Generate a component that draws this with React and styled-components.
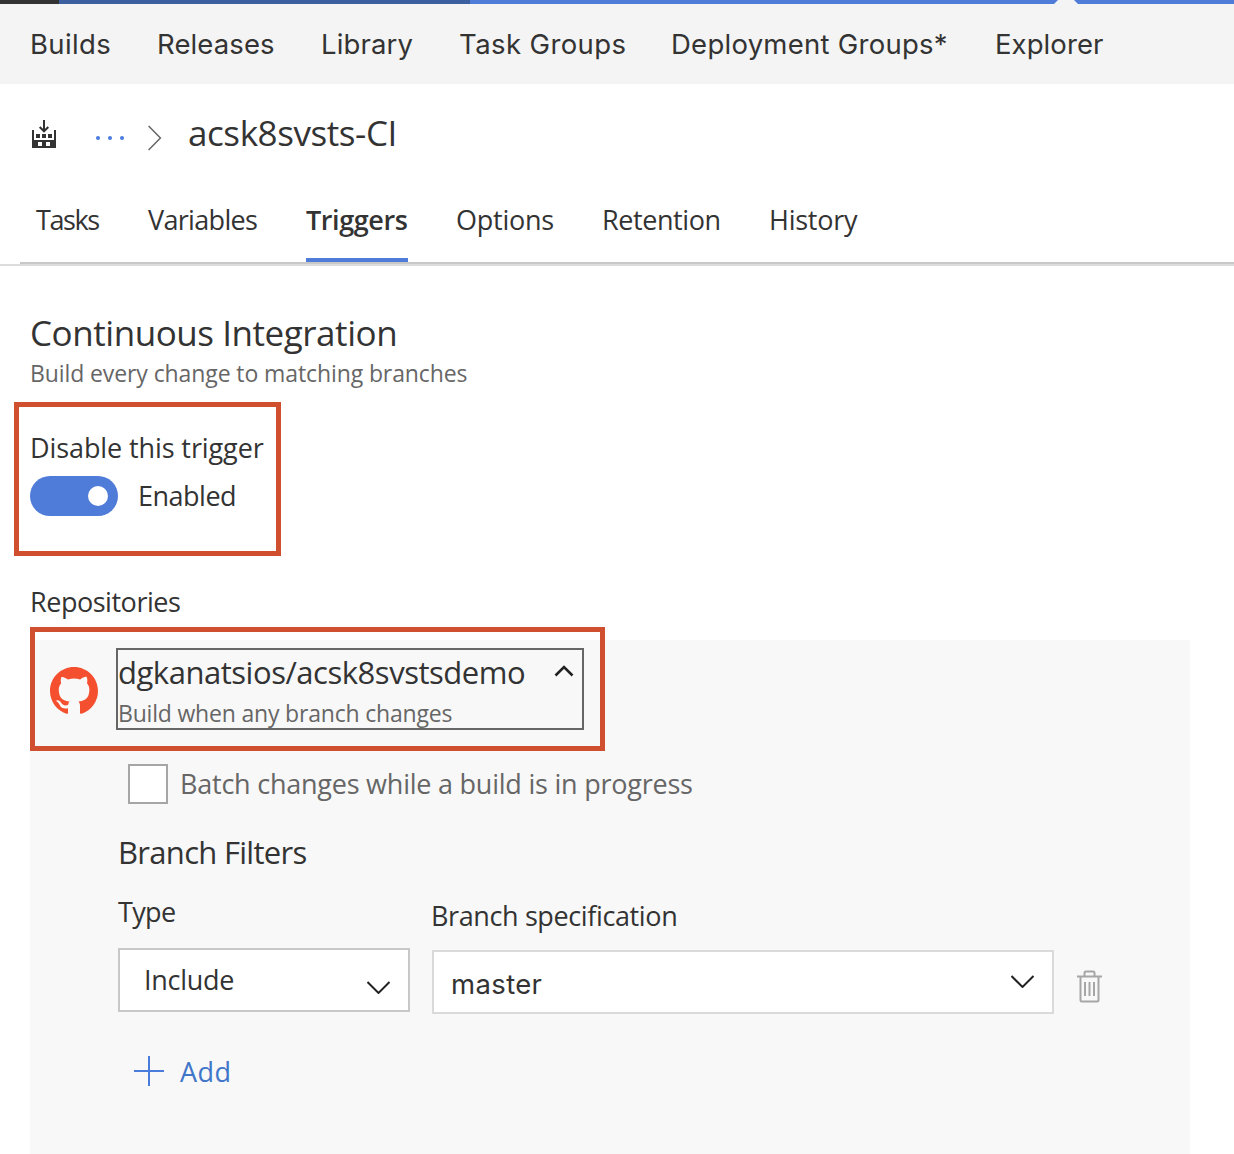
import React from "react";
import styled, { createGlobalStyle } from "styled-components";

const GlobalStyle = createGlobalStyle`
  *, *::before, *::after { box-sizing: border-box; }
  html, body { margin: 0; background: #fff; overflow: hidden; }
  body { font-family: "Open Sans", "Noto Sans", sans-serif; color: #333; }
  svg { display: block; flex: none; }
`;

const Page = styled.div`
  width: 1234px;
  height: 1154px;
  overflow: hidden;
  background: #fff;
`;

/* text with a fixed size, line height and tracking */
const Text = styled.div`
  font-size: ${(p) => p.$size || 27}px;
  line-height: ${(p) => p.$line || 36}px;
  letter-spacing: ${(p) => p.$track || 0}px;
  color: ${(p) => p.$color || "#333"};
  white-space: nowrap;
`;

const TopStrip = styled.div`
  display: grid;
  grid-template-columns: 59px 411px 584px 24px 1fr;
  height: 4px;
`;
const StripPart = styled.div`
  background: ${(p) => p.$color};
`;

const HubNav = styled.nav`
  display: grid;
  grid-template-columns: 127px 164px 138px 212px 324px 1fr;
  align-items: center;
  height: 80px;
  padding: 0 0 0 30px;
  background: #f4f4f4;
`;
const HubLink = styled(Text)`
  font-family: Inter, Roboto, sans-serif;
  font-size: 27.5px;
`;

const Crumbs = styled.header`
  display: flex;
  align-items: center;
  height: 44px;
  margin: 26px 0 0 32px;
`;
const BuildIcon = styled.svg`
  margin-top: 4px;
`;
const MoreIcon = styled.svg`
  margin: 12px 0 0 38px;
`;
const CrumbArrow = styled.svg`
  margin: 12px 26px 0 22px;
`;
const CrumbTitle = styled(Text)`
  padding-top: 2px;
`;

const TabBar = styled.div`
  border-bottom: 2px solid #dcdcdc;
`;
const TabRow = styled.div`
  display: grid;
  grid-template-columns: 112px 158px 150px 146px 167px 1fr;
  margin-left: 20px;
  padding-left: 16px;
  border-bottom: 2px solid #c8c8c8;
`;
const Tab = styled(Text)`
  justify-self: start;
  height: 108px;
  padding-top: 48px;
  font-weight: ${(p) => (p.$active ? 600 : 400)};
  border-bottom: 4px solid ${(p) => (p.$active ? "#4f7bd9" : "transparent")};
  ${(p) => p.$active && "width: 102px;"}
`;

const Content = styled.main`
  padding: 45px 0 0 30px;
`;
const Subtitle = styled(Text)`
  margin-top: 3px;
`;

const TriggerBox = styled.section`
  width: 267px;
  height: 154px;
  margin: 14px 0 0 -16px;
  padding: 23px 0 0 11px;
  border: 5px solid #cf4f2e;
`;
const ToggleRow = styled.div`
  display: flex;
  align-items: center;
  margin-top: 10px;
`;
const Toggle = styled.div`
  display: flex;
  align-items: center;
  justify-content: flex-end;
  width: 88px;
  height: 40px;
  margin-right: 20px;
  padding-right: 10px;
  border-radius: 20px;
  background: #4f7bd9;
`;
const Knob = styled.div`
  width: 20px;
  height: 20px;
  border-radius: 50%;
  background: #fff;
`;
const SectionLabel = styled(Text)`
  margin-top: 28px;
`;

const RepoPanel = styled.section`
  position: relative;
  width: 1160px;
  height: 514px;
  margin-top: 20px;
  padding-top: 8px;
  background: #f8f8f8;
`;
const Callout = styled.div`
  position: absolute;
  left: 0;
  top: -13px;
  width: 575px;
  height: 124px;
  border: 5px solid #cf4f2e;
  pointer-events: none;
`;
const RepoHeader = styled.div`
  display: flex;
  align-items: flex-start;
  padding-left: 20px;
`;
const RepoLogo = styled.svg`
  margin: 19px 18px 0 0;
`;
const RepoToggle = styled.div`
  display: flex;
  justify-content: space-between;
  width: 468px;
  height: 82px;
  padding: 1px 8px 0 0;
  border: 2px solid #666;
`;
const RepoDetail = styled(Text)`
  margin-top: 5px;
`;
const Caret = styled.svg`
  margin-top: ${(p) => p.$top}px;
`;

const CheckRow = styled.div`
  display: flex;
  align-items: center;
  gap: 12px;
  margin: 34px 0 0 98px;
`;
const Checkbox = styled.div`
  width: 40px;
  height: 40px;
  border: 2px solid #a6a6a6;
  background: #fff;
`;
const FiltersTitle = styled(Text)`
  margin: 27px 0 0 88px;
`;

const FilterRow = styled.div`
  display: grid;
  grid-template-columns: 292px 622px 26px;
  align-items: start;
  margin-left: 88px;
  column-gap: 22px;
`;
const Field = styled.div`
  padding-top: ${(p) => p.$top}px;
`;
const FieldLabel = styled(Text)`
  margin-left: ${(p) => p.$indent || 0}px;
`;
const Select = styled.div`
  display: flex;
  justify-content: space-between;
  align-items: center;
  height: 64px;
  margin-top: ${(p) => p.$gap}px;
  padding: ${(p) => p.$pad};
  border: 2px solid ${(p) => p.$border};
  background: #fff;
`;
const SelectValue = styled(Text)`
  ${(p) => p.$system && 'font-family: Inter, Roboto, sans-serif; padding-top: 4px;'}
`;
const TrashIcon = styled.svg`
  margin: 97px 0 0 1px;
`;
const AddButton = styled.div`
  display: flex;
  align-items: center;
  gap: 16px;
  margin: 38px 0 0 104px;
`;
const AddLabel = styled(Text)`
  padding-top: 2px;
`;

const hubs = [
  ["Builds", 0.35],
  ["Releases", 0.12],
  ["Library", 0.15],
  ["Task Groups", 0.4],
  ["Deployment Groups*", 0.26],
  ["Explorer", 0.08],
];

const tabs = [
  { name: "Tasks", track: -1.4 },
  { name: "Variables", track: -0.68 },
  { name: "Triggers", track: -0.42, active: true },
  { name: "Options", track: -0.25 },
  { name: "Retention", track: -0.42 },
  { name: "History", track: -0.25 },
];

function ChevronDown({ top }) {
  return (
    <Caret $top={top} width="24" height="13" viewBox="0 0 24 13" fill="none" stroke="#222" strokeWidth="2">
      <path d="M0.500 1 L11.500 12 L22.500 1" />
    </Caret>
  );
}

export default function App() {
  return (
    <Page>
      <GlobalStyle />
      <TopStrip>
        <StripPart $color="#333" />
        <StripPart $color="#3b5f9f" />
        <StripPart $color="#4f7bd9" />
        <svg width="24" height="4" viewBox="0 0 24 4">
          <rect width="24" height="4" fill="#4f7bd9" />
          <path d="M0 4 L4 0 H20 L24 4 Z" fill="#f4f4f4" />
        </svg>
        <StripPart $color="#4f7bd9" />
      </TopStrip>
      <HubNav>
        {hubs.map(([name, track]) => (
          <HubLink key={name} $track={track}>{name}</HubLink>
        ))}
      </HubNav>

      <Crumbs>
        <BuildIcon width="24" height="28" viewBox="0 0 24 28">
          <path
            fill="#333"
            fillRule="evenodd"
            d="M0 10h2v10h20V10h2v18H0z M6 22h4v4H6z M14 22h4v4h-4z"
          />
          <path fill="#333" d="M4 14h4v4H4z M10 14h4v4h-4z M16 14h4v4h-4z" />
          <path fill="none" stroke="#333" strokeWidth="2" d="M12 0v11 M7.700 7 L12 11.300 L16.300 7" />
        </BuildIcon>
        <MoreIcon width="32" height="6" viewBox="0 0 32 6" fill="#4a7ddb">
          <circle cx="4" cy="3" r="2" />
          <circle cx="16" cy="3" r="2" />
          <circle cx="28" cy="3" r="2" />
        </MoreIcon>
        <CrumbArrow width="14" height="26" viewBox="0 0 14 26" fill="none" stroke="#666" strokeWidth="1.500">
          <path d="M0.600 1 L12.400 13 L0.600 25" />
        </CrumbArrow>
        <CrumbTitle $size={35} $line={44} $track={-0.42}>acsk8svsts-CI</CrumbTitle>
      </Crumbs>

      <TabBar>
        <TabRow>
          {tabs.map((t) => (
            <Tab key={t.name} $track={t.track} $active={t.active}>{t.name}</Tab>
          ))}
        </TabRow>
      </TabBar>

      <Content>
        <Text $size={35} $line={44} $track={-0.45}>Continuous Integration</Text>
        <Subtitle $size={23} $line={30} $track={-0.1} $color="#666">
          Build every change to matching branches
        </Subtitle>

        <TriggerBox>
          <Text $track={-0.1}>Disable this trigger</Text>
          <ToggleRow>
            <Toggle><Knob /></Toggle>
            <Text $track={-0.5}>Enabled</Text>
          </ToggleRow>
        </TriggerBox>

        <SectionLabel $track={-0.47}>Repositories</SectionLabel>

        <RepoPanel>
          <RepoHeader>
            <RepoLogo width="48" height="48" viewBox="0 0 16 16" fill="#f4502f">
              <path d="M8 0C3.58 0 0 3.58 0 8c0 3.54 2.29 6.53 5.47 7.59.4.07.55-.17.55-.38 0-.19-.01-.82-.01-1.49-2.01.37-2.53-.49-2.69-.94-.09-.23-.48-.94-.82-1.13-.28-.15-.68-.52-.01-.53.63-.01 1.08.58 1.23.82.72 1.21 1.87.87 2.33.66.07-.52.28-.87.51-1.07-1.78-.2-3.64-.89-3.64-3.95 0-.87.31-1.59.82-2.15-.08-.2-.36-1.02.08-2.12 0 0 .67-.21 2.2.82.64-.18 1.32-.27 2-.27.68 0 1.36.09 2 .27 1.53-1.04 2.2-.82 2.2-.82.44 1.1.16 1.92.08 2.12.51.56.82 1.27.82 2.15 0 3.07-1.87 3.75-3.65 3.95.29.25.54.73.54 1.48 0 1.07-.01 1.93-.01 2.2 0 .21.15.46.55.38A8.013 8.013 0 0016 8c0-4.42-3.58-8-8-8z" />
            </RepoLogo>
            <RepoToggle>
              <div>
                <Text $size={31} $line={42} $track={-0.47}>dgkanatsios/acsk8svstsdemo</Text>
                <RepoDetail $size={23} $line={30} $track={-0.19} $color="#666">
                  Build when any branch changes
                </RepoDetail>
              </div>
              <Caret $top={13} width="20" height="13" viewBox="0 0 20 13" fill="none" stroke="#222" strokeWidth="2.600">
                <path d="M1.500 11.500 L10 3 L18.500 11.500" />
              </Caret>
            </RepoToggle>
          </RepoHeader>

          <CheckRow>
            <Checkbox />
            <Text $track={-0.23} $color="#666">Batch changes while a build is in progress</Text>
          </CheckRow>

          <FiltersTitle $size={31} $line={42} $track={-0.7}>Branch Filters</FiltersTitle>

          <FilterRow>
            <Field $top={20}>
              <FieldLabel $line={37} $track={-0.64}>Type</FieldLabel>
              <Select $gap={18} $pad="0 17px 0 24px" $border="#c8c8c8">
                <SelectValue $track={-0.26}>Include</SelectValue>
                <ChevronDown top={14} />
              </Select>
            </Field>
            <Field $top={24}>
              <FieldLabel $line={37} $track={-0.38} $indent={-1}>Branch specification</FieldLabel>
              <Select $gap={16} $pad="0 17px 0 17px" $border="#dadada">
                <SelectValue $system $size={27.5} $track={0.36}>master</SelectValue>
                <ChevronDown top={-1} />
              </Select>
            </Field>
            <TrashIcon width="26" height="34" viewBox="0 0 26 34" fill="none" stroke="#a6a6a6" strokeWidth="2">
              <path d="M0 6.500 H25 M7.500 6 V3 Q7.500 1.500 9 1.500 H16 Q17.500 1.500 17.500 3 V6" />
              <path d="M3.500 7 V30 Q3.500 31.500 5 31.500 H20 Q21.500 31.500 21.500 30 V7" />
              <path d="M8 12 V26 M12.500 12 V26 M17 12 V26" />
            </TrashIcon>
          </FilterRow>

          <AddButton>
            <svg width="30" height="30" viewBox="0 0 30 30" stroke="#4a7ddb" strokeWidth="2">
              <path d="M15 0 V30 M0 15 H30" />
            </svg>
            <AddLabel $track={0.4} $color="#3f76c9">Add</AddLabel>
          </AddButton>

          <Callout />
        </RepoPanel>
      </Content>
    </Page>
  );
}
